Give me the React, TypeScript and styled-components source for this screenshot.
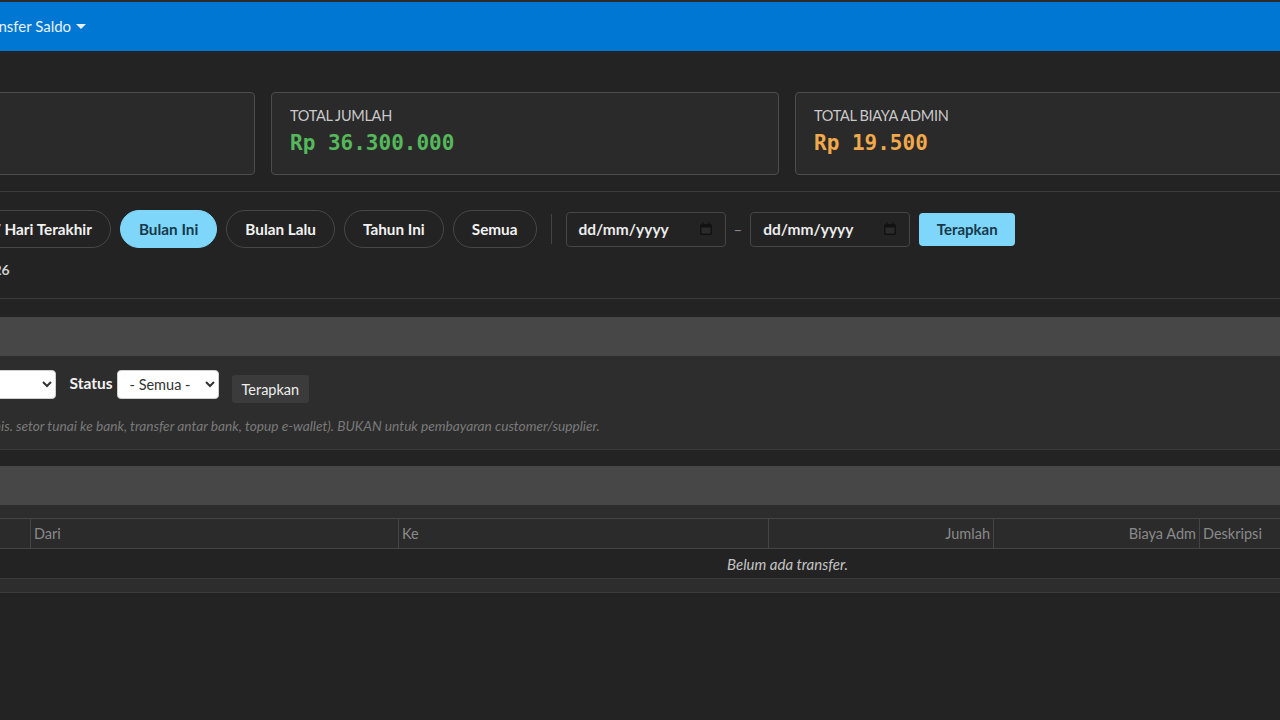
import React from 'react';
import styled, { createGlobalStyle } from 'styled-components';

const GlobalStyle = createGlobalStyle`
  html, body {
    margin: 0;
    padding: 0;
    background: #232323;
    font-family: Lato, "Open Sans", Arial, sans-serif;
    color: #e6e6e6;
  }
  * { box-sizing: border-box; }
`;

const Viewport = styled.div`
  width: 1280px;
  height: 720px;
  overflow: hidden;
  background: #232323;
`;

/* page is scrolled sideways in the screenshot */
const Page = styled.div`
  width: 1588px;
  margin-left: -269px;
`;

const Navbar = styled.nav`
  height: 51px;
  background: #0177d4;
  border-top: 2px solid #2a2a2a;
  display: flex;
  align-items: center;
  padding: 0 16px 1px;
`;

const Brand = styled.span`
  font-size: 18px;
  font-weight: 700;
  color: #fff;
  margin-right: 16px;
`;

const NavItem = styled.span`
  font-size: 15px;
  color: #e8f1fb;
  padding: 0 10px;
  display: inline-flex;
  align-items: center;
  gap: 4px;
`;

const Caret = styled.span`
  width: 0;
  height: 0;
  border-left: 5px solid transparent;
  border-right: 5px solid transparent;
  border-top: 5px solid #e8f1fb;
  margin-left: 1px;
`;

const Content = styled.div`
  padding: 41px 16px 0;
`;

const Cards = styled.div`
  display: grid;
  grid-template-columns: repeat(3, 1fr);
  gap: 16px;
`;

const Card = styled.div`
  height: 83px;
  background: #2a2a2a;
  border: 1px solid #4d4d4d;
  border-radius: 4px;
  padding: 14px 18px;
`;

const CardLabel = styled.div`
  font-size: 14.5px;
  color: #c9c9c9;
  letter-spacing: -0.3px;
  line-height: 18px;
`;

const CardValue = styled.div<{ $color: string }>`
  font-family: "DejaVu Sans Mono", "Liberation Mono", monospace;
  font-weight: 700;
  font-size: 21px;
  line-height: 28px;
  margin-top: 4px;
  color: ${(p) => p.$color};
`;

const PeriodBlock = styled.div`
  margin-top: 16px;
  border-top: 1px solid #3a3a3a;
  border-bottom: 1px solid #3a3a3a;
  padding: 18px 0 19px;
`;

const PillRow = styled.div`
  display: flex;
  align-items: center;
  gap: 9px;
  padding-left: 10px;
`;

const Pill = styled.button<{ $active?: boolean }>`
  height: 38px;
  padding: 0 18px;
  border-radius: 19px;
  border: 1px solid ${(p) => (p.$active ? '#7fd6fb' : '#474747')};
  background: ${(p) => (p.$active ? '#7fd6fb' : 'transparent')};
  color: ${(p) => (p.$active ? '#17394a' : '#f2f2f2')};
  font-family: Lato, sans-serif;
  font-size: 15.3px;
  font-weight: 700;
  white-space: nowrap;
`;

const VSep = styled.span`
  width: 1px;
  height: 30px;
  background: #444;
  margin: 0 5px;
`;

const DateBox = styled.div`
  width: 160px;
  height: 35px;
  border: 1px solid #474747;
  border-radius: 4px;
  background: #232323;
  display: flex;
  align-items: center;
  justify-content: space-between;
  padding: 0 12px;
  font-size: 15.5px;
  font-weight: 700;
  color: #ececec;
`;

const Dash = styled.span`
  color: #888;
  font-size: 15px;
  margin: 0 -1px;
`;

const ApplyButton = styled.button`
  height: 33px;
  padding: 0 17.5px;
  border: none;
  border-radius: 4px;
  background: #7fd6fb;
  color: #17394a;
  font-family: Lato, sans-serif;
  font-size: 15px;
  font-weight: 700;
`;

const PeriodText = styled.div`
  margin-top: 13px;
  font-size: 14px;
  font-weight: 700;
  color: #cfcfcf;
  line-height: 18px;
  white-space: nowrap;
`;

const Panel = styled.section<{ $gap: number }>`
  margin-top: ${(p) => p.$gap}px;
  border-bottom: 1px solid #3a3a3a;
`;

const PanelHeader = styled.div`
  height: 39px;
  background: #474747;
  display: flex;
  align-items: center;
  padding: 0 13px;
  font-size: 15px;
  font-weight: 700;
  color: #eee;
`;

const PanelBody = styled.div<{ $pad: string }>`
  background: #2d2d2d;
  padding: ${(p) => p.$pad};
`;

const FormRow = styled.div`
  display: flex;
  align-items: flex-start;
`;

const FieldLabel = styled.label`
  font-size: 15.5px;
  font-weight: 700;
  color: #f2f2f2;
  line-height: 27px;
  margin: 0 4px 0 14px;
  &:first-child { margin-left: 0; }
`;

const Select = styled.select<{ $w: number }>`
  width: ${(p) => p.$w}px;
  height: 29px;
  border: 1px solid #d0d0d0;
  border-radius: 4px;
  background: #fff;
  color: #333;
  font-family: Lato, sans-serif;
  font-size: 14.5px;
  padding: 0 8px;
`;

const SmallButton = styled.button`
  margin-left: 13px;
  margin-top: 5px;
  height: 28px;
  padding: 0 10px;
  border: none;
  border-radius: 3px;
  background: #3b3b3b;
  color: #eee;
  font-family: Lato, sans-serif;
  font-size: 14.5px;
`;

const Hint = styled.div`
  margin-top: 14px;
  font-size: 13.7px;
  font-style: italic;
  color: #7a7a7a;
  line-height: 18px;
  white-space: nowrap;
`;

const TableWrap = styled.div`
  overflow: hidden;
`;

const Table = styled.table`
  width: 2054px;
  border-collapse: collapse;
  table-layout: fixed;
  font-size: 14.5px;
`;

const Th = styled.th<{ $right?: boolean }>`
  height: 30px;
  padding: 0 3px;
  background: #2b2b2b;
  border: 1px solid #454545;
  color: #8a8a8a;
  font-weight: 400;
  text-align: ${(p) => (p.$right ? 'right' : 'left')};
  white-space: nowrap;
`;

const EmptyCell = styled.td`
  height: 30px;
  background: #232323;
  border: 1px solid #3a3a3a;
  text-align: center;
  font-size: 15px;
  font-style: italic;
  color: #c4c4c4;
`;

const CalendarIcon = () => (
  <svg width="14" height="14" viewBox="0 0 14 14">
    <rect x="1" y="2" width="12" height="11" rx="1.5" fill="#121212" />
    <rect x="3" y="0.5" width="1.6" height="3" fill="#121212" />
    <rect x="9.4" y="0.5" width="1.6" height="3" fill="#121212" />
    <rect x="2.5" y="5.5" width="9" height="6" fill="#2a2a2a" />
  </svg>
);

const columns = [
  { label: 'Tanggal', w: 270 },
  { label: 'Dari', w: 368 },
  { label: 'Ke', w: 370 },
  { label: 'Jumlah', w: 225, right: true },
  { label: 'Biaya Adm', w: 206, right: true },
  { label: 'Deskripsi', w: 300 },
  { label: 'Dibuat Oleh', w: 170 },
  { label: 'Aksi', w: 145 },
];

export default function App() {
  return (
    <Viewport>
      <GlobalStyle />
      <Page>
        <Navbar>
          <Brand>Kasir</Brand>
          <NavItem>Dashboard</NavItem>
          <NavItem>Laporan</NavItem>
          <NavItem>
            Transfer Saldo <Caret />
          </NavItem>
        </Navbar>

        <Content>
          <Cards>
            <Card>
              <CardLabel>JUMLAH TRANSFER</CardLabel>
              <CardValue $color="#e6e6e6">3</CardValue>
            </Card>
            <Card>
              <CardLabel>TOTAL JUMLAH</CardLabel>
              <CardValue $color="#55b85b">Rp 36.300.000</CardValue>
            </Card>
            <Card>
              <CardLabel>TOTAL BIAYA ADMIN</CardLabel>
              <CardValue $color="#f1a94a">Rp 19.500</CardValue>
            </Card>
          </Cards>

          <PeriodBlock>
            <PillRow>
              <Pill>Hari Ini</Pill>
              <Pill>Minggu Ini</Pill>
              <Pill>7 Hari Terakhir</Pill>
              <Pill $active>Bulan Ini</Pill>
              <Pill>Bulan Lalu</Pill>
              <Pill>Tahun Ini</Pill>
              <Pill>Semua</Pill>
              <VSep />
              <DateBox>
                dd/mm/yyyy <CalendarIcon />
              </DateBox>
              <Dash>–</Dash>
              <DateBox>
                dd/mm/yyyy <CalendarIcon />
              </DateBox>
              <ApplyButton>Terapkan</ApplyButton>
            </PillRow>
            <PeriodText>Menampilkan: 01/01/2026 – 31/01/2026</PeriodText>
          </PeriodBlock>

          <Panel $gap={18}>
            <PanelHeader>Filter</PanelHeader>
            <PanelBody $pad="14px 13px 14px">
              <FormRow>
                <FieldLabel>Akun</FieldLabel>
                <Select $w={255}>
                  <option>- Semua Akun -</option>
                </Select>
                <FieldLabel>Status</FieldLabel>
                <Select $w={102}>
                  <option>- Semua -</option>
                </Select>
                <SmallButton>Terapkan</SmallButton>
              </FormRow>
              <Hint>
                Transfer antar akun kas/bank milik toko (mis. setor tunai ke bank, transfer antar bank, topup
                e-wallet). BUKAN untuk pembayaran customer/supplier.
              </Hint>
            </PanelBody>
          </Panel>

          <Panel $gap={16}>
            <PanelHeader>Daftar Transfer</PanelHeader>
            <PanelBody $pad="13px 13px 13px">
              <TableWrap>
                <Table>
                  <colgroup>
                    {columns.map((c) => (
                      <col key={c.label} style={{ width: c.w }} />
                    ))}
                  </colgroup>
                  <thead>
                    <tr>
                      {columns.map((c) => (
                        <Th key={c.label} $right={c.right}>
                          {c.label}
                        </Th>
                      ))}
                    </tr>
                  </thead>
                  <tbody>
                    <tr>
                      <EmptyCell colSpan={columns.length}>Belum ada transfer.</EmptyCell>
                    </tr>
                  </tbody>
                </Table>
              </TableWrap>
            </PanelBody>
          </Panel>
        </Content>
      </Page>
    </Viewport>
  );
}
